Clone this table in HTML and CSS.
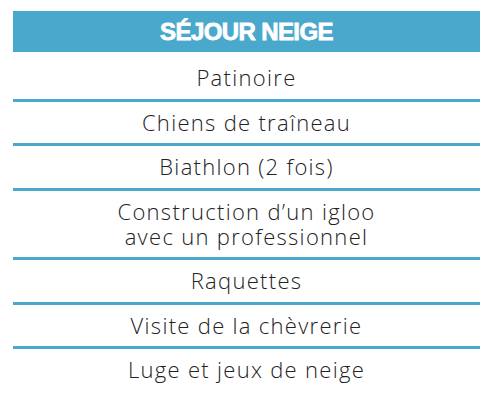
FILE: index.html
```html
<!DOCTYPE html>
<html lang="fr">
<head>
<meta charset="utf-8">
<title>Séjour neige</title>
<link rel="stylesheet" href="styles.css">
</head>
<body>
<div class="card">
  <div class="head">SÉJOUR NEIGE</div>
  <ul class="list">
    <li class="row">Patinoire</li>
    <li class="row">Chiens de traîneau</li>
    <li class="row">Biathlon (2 fois)</li>
    <li class="row">Construction d’un igloo<br>avec un professionnel</li>
    <li class="row">Raquettes</li>
    <li class="row">Visite de la chèvrerie</li>
    <li class="row">Luge et jeux de neige</li>
  </ul>
</div>
</body>
</html>
```
FILE: styles.css
```css
html, body {
  margin: 0;
  padding: 0;
  background: #ffffff;
}
body {
  padding: 11px 17px 0 13px;
}
.card {
  width: 467px;
}
.head {
  background: #4aa8cc;
  color: #ffffff;
  height: 41px;
  display: flex;
  align-items: center;
  justify-content: center;
  font-family: "Liberation Sans", Arial, sans-serif;
  font-weight: 700;
  font-size: 24px;
  letter-spacing: -0.6px;
  -webkit-text-stroke: 0.8px #ffffff;
  margin-bottom: 5px;
}
.list {
  list-style: none;
  margin: 0;
  padding: 0;
}
.row {
  font-family: "Open Sans", "Noto Sans", sans-serif;
  font-weight: 350;
  font-size: 22px;
  line-height: 25px;
  color: #222222;
  text-align: center;
  padding: 8.25px 0;
  border-bottom: 3px solid #4aa8cc;
  letter-spacing: 1.3px;
}
.row:last-child {
  border-bottom: none;
}
```
